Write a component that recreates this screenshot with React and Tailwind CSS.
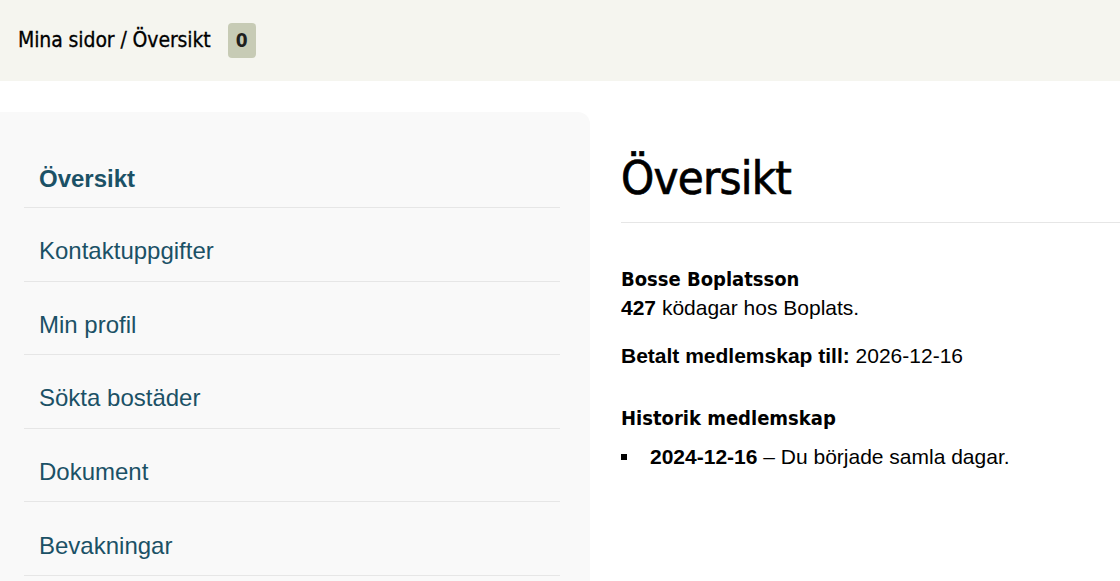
import React from "react";

const din = { fontFamily: '"DejaVu Sans Condensed", "DejaVu Sans", sans-serif' };

const nav = ["Kontaktuppgifter", "Min profil", "Sökta bostäder", "Dokument", "Bevakningar"];

export default function App() {
  return (
    <div className="w-[1120px] h-[581px] overflow-hidden bg-white" style={{ fontFamily: '"Liberation Sans", Arial, sans-serif' }}>
      <header className="h-[81px] bg-[#f5f5ef] flex items-center pl-[18px] gap-[17px]">
        <span className="text-[21px] text-black tracking-[-0.1px] [-webkit-text-stroke:0.3px_black]" style={din}>Mina sidor / Översikt</span>
        <span className="w-[28px] h-[35px] rounded-[4px] bg-[#c7cbb5] flex items-center justify-center text-[19px] font-bold text-[#1f1f1f]" style={din}>0</span>
      </header>
      <div className="flex mt-[31px]">
        <aside className="w-[590px] h-[500px] bg-[#f9f9f9] rounded-tr-[12px] pl-[24px] pr-[30px] pt-[38px] shrink-0">
          <ul>
            <li className="h-[58px] border-b border-[#e6e6e6] pl-[15px] flex items-center text-[24px] font-bold text-[#1b5166]">Översikt</li>
            {nav.map((n) => (
              <li key={n} className="h-[73.6px] border-b border-[#e6e6e6] pl-[15px] flex items-center pt-[14px] text-[24px] text-[#1b5166]">{n}</li>
            ))}
          </ul>
        </aside>
        <main className="flex-1 pl-[31px] pt-[38px] text-black">
          <h1 className="text-[47px] leading-[56px] tracking-[-0.8px] pb-[16px] border-b border-[#e6e6e6] [-webkit-text-stroke:0.7px_black]" style={din}>Översikt</h1>
          <div className="mt-[43px]">
            <div className="text-[20px] font-bold leading-[26px]" style={din}>Bosse Boplatsson</div>
            <p className="text-[21px] leading-[32px]"><b>427</b> ködagar hos Boplats.</p>
            <p className="text-[21px] leading-[32px] mt-[16px]"><b>Betalt medlemskap till:</b> 2026-12-16</p>
            <div className="text-[20px] font-bold leading-[28px] mt-[32px]" style={din}>Historik medlemskap</div>
            <ul className="mt-[9px] text-[21px] leading-[32px]">
              <li className="flex items-center">
                <span className="w-[6px] h-[6px] bg-black shrink-0"></span>
                <span className="ml-[23px]"><b>2024-12-16</b> – Du började samla dagar.</span>
              </li>
            </ul>
          </div>
        </main>
      </div>
    </div>
  );
}
